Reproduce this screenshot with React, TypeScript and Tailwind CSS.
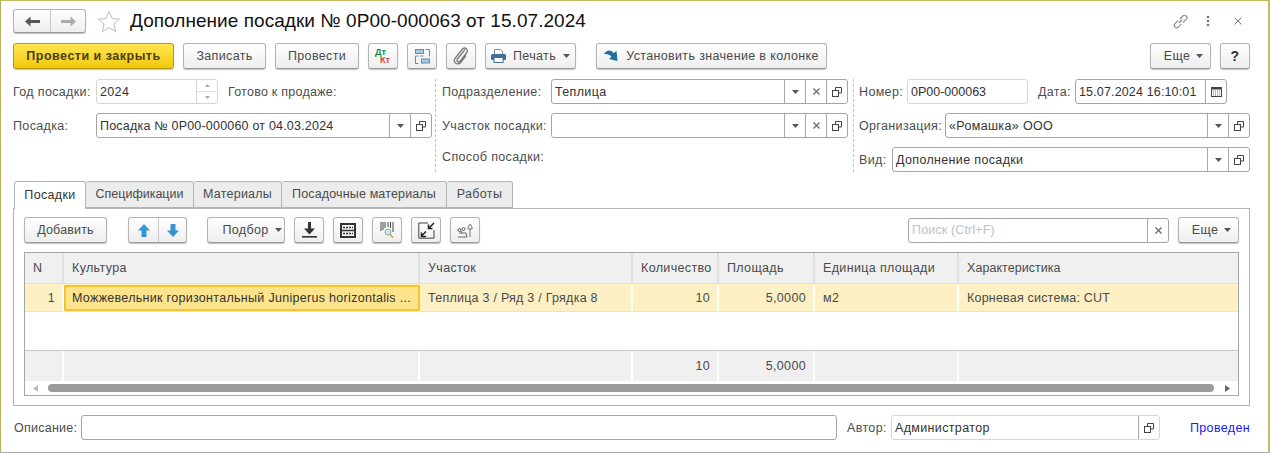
import React from 'react';

const btn = 'h-[26px] flex items-center justify-center rounded-[3px] border border-[#b4b4b4] border-b-[#9a9a9a] bg-gradient-to-b from-white to-[#eeeeee] shadow-[0_1px_1px_rgba(0,0,0,0.25)] text-[#4a4a4a] shrink-0';

const Caret = () => (
  <svg width="7" height="4" viewBox="0 0 7 4" className="shrink-0"><path d="M0 0h7L3.5 4z" fill="#555" /></svg>
);

const OpenIcon = () => (
  <svg width="10" height="10" viewBox="0 0 10 10" fill="none" stroke="#444" strokeWidth="1">
    <path d="M3.500 3V.5h6v5.500H7" />
    <rect x=".5" y="3.500" width="6" height="6" fill="#fff" />
  </svg>
);

const Cross = () => (
  <svg width="7" height="7" viewBox="0 0 7 7" stroke="#666" strokeWidth="1.2"><path d="M.5.5l6 6M6.5.5l-6 6" /></svg>
);

const FieldBtn = ({ children }: { children: React.ReactNode }) => (
  <div className="w-[21px] h-full border-l border-[#a8a8a8] flex items-center justify-center shrink-0">{children}</div>
);

const Input = ({ value, className, soft, textClass, children }: { value?: string; className: string; soft?: boolean; textClass?: string; children?: React.ReactNode }) => (
  <div className={`h-[25px] flex items-stretch rounded-[3px] border bg-white shrink-0 ${soft ? 'border-[#d6d6d6]' : 'border-[#a5a5a5]'} ${className}`}>
    <div className={`flex-1 min-w-0 px-[3px] pt-px flex items-center whitespace-nowrap overflow-hidden text-[#333] ${textClass ?? ''}`}>{value}</div>
    {children}
  </div>
);

const Label = ({ children, className }: { children: React.ReactNode; className?: string }) => (
  <div className={`text-[#4d4d4d] whitespace-nowrap shrink-0 pt-px ${className ?? ''}`}>{children}</div>
);

const cols = ['w-[39px]', 'w-[356px]', 'w-[213px]', 'w-[86px]', 'w-[96px]', 'w-[144px]', 'flex-1'];

const Row = ({ cells, className, sep }: { cells: { t?: string; right?: boolean; cur?: boolean; tc?: string }[]; className: string; sep: string }) => (
  <div className={`flex ${className}`}>
    {cells.map((c, i) => (
      <div
        key={i}
        className={`${cols[i]} flex items-center px-2 min-w-0 whitespace-nowrap text-[#4a4a4a] ${c.tc ?? ''} ${c.right ? 'justify-end !pr-[7px]' : ''} ${i < 6 ? `border-r-2 ${sep}` : ''} ${c.cur ? 'bg-[#fde48c] !border-2 !border-[#f6c42c] rounded-[1px] !text-[#333] px-[6px]' : ''}`}
      >
        {c.t}
      </div>
    ))}
  </div>
);

export default function App() {
  return (
    <div className="w-[1270px] h-[453px] bg-white overflow-hidden text-[12.5px] tracking-[0.35px] font-['Liberation_Sans',Arial,sans-serif]">
      <div className="w-[1270px] h-[453px] flex flex-col border-t border-l border-r-2 border-b border-t-[#c9b862] border-l-[#c0ae60] border-r-[#c9b862] border-b-[#a8a8a8] pl-3 pr-[18px]">
        {/* Title */}
        <div className="flex items-center h-[24px] mt-[8px] shrink-0">
          <div className="w-[73px] h-[24px] flex rounded-[3px] border border-[#b4b4b4] border-b-[#9a9a9a] bg-gradient-to-b from-white to-[#eeeeee] shadow-[0_1px_1px_rgba(0,0,0,0.25)] shrink-0">
            <div className="w-[37px] flex items-center justify-center border-r border-[#c8c8c8]">
              <svg width="15" height="11" viewBox="0 0 15 11"><path d="M0 5.5L5.5 0.5v3.4H15v3.2H5.5v3.4z" fill="#555" /></svg>
            </div>
            <div className="flex-1 flex items-center justify-center">
              <svg width="15" height="11" viewBox="0 0 15 11"><path d="M15 5.5L9.5 0.5v3.4H0v3.2h9.5v3.4z" fill="#aaa" /></svg>
            </div>
          </div>
          <svg width="24" height="23" viewBox="0 0 24 23" className="ml-[11px] shrink-0" fill="#fff" stroke="#bdbdbd"><path d="M12 1.5l3.1 7 7.4.7-5.6 5 1.7 7.4L12 17.7l-6.6 3.9 1.7-7.4-5.6-5 7.4-.7z" /></svg>
          <div className="ml-[9px] text-[19px] tracking-[0.05px] text-[#111] whitespace-nowrap">Дополнение посадки № 0P00-000063 от 15.07.2024</div>
          <div className="flex-1" />
          <svg width="17" height="17" viewBox="0 0 17 17" fill="none" stroke="#8a8a8a" strokeWidth="1.1" className="mr-[17px]">
            <path d="M7 10l3.5-3.5M6.2 7.5L3 10.700a2.400 2.400 0 0 0 3.400 3.400l3-3M7.800 6l3-3a2.400 2.400 0 0 1 3.400 3.400l-3.200 3.100" />
          </svg>
          <svg width="4" height="12" viewBox="0 0 4 12" fill="#777" className="mr-[24px]"><circle cx="2" cy="2" r="1.300" /><circle cx="2" cy="6" r="1.300" /><circle cx="2" cy="10" r="1.300" /></svg>
          <svg width="8" height="8" viewBox="0 0 8 8" stroke="#777" className="mr-[8px]"><path d="M.5.5l7 7M7.500.5l-7 7" /></svg>
        </div>

        {/* Command bar */}
        <div className="flex items-center mt-[10px] shrink-0">
          <div className="h-[26px] w-[161px] flex items-center justify-center rounded-[3px] border border-[#b39a10] bg-gradient-to-b from-[#ffe64a] to-[#f2c800] shadow-[0_1px_1px_rgba(0,0,0,0.25)] font-bold tracking-[0.5px] text-[#4a3f10] shrink-0">Провести и закрыть</div>
          <div className={`${btn} w-[83px] ml-[9px]`}>Записать</div>
          <div className={`${btn} w-[84px] ml-[9px]`}>Провести</div>
          <div className={`${btn} w-[30px] ml-[9px] flex-col !items-start pl-[6px] text-[9px] font-bold leading-[8px] tracking-normal`}>
            <span className="text-[#0e8a4a]">Дт</span>
            <span className="text-[#e5383b] ml-[5px]">Кт</span>
          </div>
          <div className={`${btn} w-[30px] ml-[9px]`}>
            <svg width="15" height="15" viewBox="0 0 15 15" fill="none" stroke="#5b8fb9">
              <rect x=".5" y=".5" width="8" height="4" fill="#a9c8e2" />
              <rect x="6.500" y="10" width="8" height="4" fill="#a9c8e2" />
              <path d="M10.500.5h4v7M3.500 7H.5v7.500h3M8.500 7H5" />
            </svg>
          </div>
          <div className={`${btn} w-[30px] ml-[9px]`}>
            <svg width="16" height="20" viewBox="0 0 16 20" fill="none" stroke="#777" strokeWidth="1.300"><path d="M12.500 5L5 14.500c-1.500 2 1 4 2.600 2.200L14 8.500c2.500-3.200-1.500-7-4.200-3.800L2.500 14c-2.800 4 3 7.500 6 3.500l5-6.500" transform="translate(-.5 -1.500)" /></svg>
          </div>
          <div className={`${btn} w-[91px] ml-[9px] gap-[7px]`}>
            <svg width="15" height="14" viewBox="0 0 15 14"><path d="M3.500.5h6l2 2v3h-8z" fill="#fff" stroke="#888" /><rect y="5" width="15" height="6" rx="1.500" fill="#3f6f9a" /><rect x="3" y="8.500" width="9" height="5" fill="#fff" stroke="#3f6f9a" /></svg>
            <span>Печать</span>
            <Caret />
          </div>
          <div className={`${btn} w-[231px] ml-[20px] gap-[8px]`}>
            <svg width="14" height="12" viewBox="0 0 14 12"><path d="M0 4C3 -.5 7.500 -.5 9.500 3.200L12.500 1l1 10-8.500-2 2.400-2.200C6 4.800 3.500 3.800 0 4z" fill="#1f6ea8" /></svg>
            <span>Установить значение в колонке</span>
          </div>
          <div className="flex-1" />
          <div className={`${btn} w-[61px] gap-[6px] pl-[6px]`}><span>Еще</span><Caret /></div>
          <div className={`${btn} w-[30px] ml-[9px] font-bold text-[14px] text-[#333]`}>?</div>
        </div>

        {/* Form columns */}
        <div className="flex mt-[10px] h-[93px] shrink-0">
          <div className="w-[419px] flex flex-col gap-[9px] shrink-0">
            <div className="flex items-center">
              <Label className="w-[83px]">Год посадки:</Label>
              <Input value="2024" soft className="w-[122px]">
                <div className="w-[21px] border-l border-[#d6d6d6] flex flex-col shrink-0">
                  <div className="flex-1 border-b border-[#e0e0e0] flex items-center justify-center"><svg width="5" height="3" viewBox="0 0 5 3"><path d="M2.500 0L5 3H0z" fill="#aaa" /></svg></div>
                  <div className="flex-1 flex items-center justify-center"><svg width="5" height="3" viewBox="0 0 5 3"><path d="M0 0h5L2.500 3z" fill="#aaa" /></svg></div>
                </div>
              </Input>
              <Label className="ml-[10px] tracking-[0.25px]">Готово к продаже:</Label>
            </div>
            <div className="flex items-center">
              <Label className="w-[83px]">Посадка:</Label>
              <Input value="Посадка № 0P00-000060 от 04.03.2024" textClass="tracking-[0.2px]" className="w-[336px]">
                <FieldBtn><Caret /></FieldBtn>
                <FieldBtn><OpenIcon /></FieldBtn>
              </Input>
            </div>
          </div>
          <div className="ml-[3px] mr-[6px] border-l border-dashed border-[#c4c4c4] h-[93px] shrink-0" />
          <div className="w-[406px] flex flex-col gap-[9px] shrink-0">
            <div className="flex items-center">
              <Label className="w-[109px]">Подразделение:</Label>
              <Input value="Теплица" className="w-[297px]">
                <FieldBtn><Caret /></FieldBtn>
                <FieldBtn><Cross /></FieldBtn>
                <FieldBtn><OpenIcon /></FieldBtn>
              </Input>
            </div>
            <div className="flex items-center">
              <Label className="w-[109px]">Участок посадки:</Label>
              <Input className="w-[297px]">
                <FieldBtn><Caret /></FieldBtn>
                <FieldBtn><Cross /></FieldBtn>
                <FieldBtn><OpenIcon /></FieldBtn>
              </Input>
            </div>
            <Label className="mt-0">Способ посадки:</Label>
          </div>
          <div className="ml-[5px] mr-[5px] border-l border-dashed border-[#c4c4c4] h-[93px] shrink-0" />
          <div className="flex-1 flex flex-col gap-[9px]">
            <div className="flex items-center">
              <Label className="w-[48px]">Номер:</Label>
              <Input value="0P00-000063" textClass="tracking-normal" soft className="w-[121px]" />
              <Label className="ml-[10px] w-[37px]">Дата:</Label>
              <Input value="15.07.2024 16:10:01" textClass="tracking-[0.15px]" className="w-[152px]">
                <FieldBtn>
                  <svg width="11" height="11" viewBox="0 0 11 11"><rect x=".5" y="1.500" width="10" height="9" fill="none" stroke="#444" /><rect x=".5" y="1" width="10" height="2.500" fill="#444" /><path d="M2 5h7M2 7h7M2 9h7" stroke="#777" strokeDasharray="1 1" /></svg>
                </FieldBtn>
              </Input>
            </div>
            <div className="flex items-center">
              <Label className="w-[86px]">Организация:</Label>
              <Input value="«Ромашка» ООО" className="flex-1 !shrink">
                <FieldBtn><Caret /></FieldBtn>
                <FieldBtn><OpenIcon /></FieldBtn>
              </Input>
            </div>
            <div className="flex items-center">
              <Label className="w-[33px]">Вид:</Label>
              <Input value="Дополнение посадки" className="flex-1 !shrink">
                <FieldBtn><Caret /></FieldBtn>
                <FieldBtn><OpenIcon /></FieldBtn>
              </Input>
            </div>
          </div>
        </div>

        {/* Tabs */}
        <div className="flex h-[28px] mt-[9px] pl-px shrink-0 relative z-10">
          <div className="w-[72px] h-[28px] flex items-center justify-center bg-white border border-b-0 border-[#b4b4b4] rounded-t-[3px] text-[#333]">Посадки</div>
          <div className="w-[108px] h-[27px] flex items-center justify-center bg-[#ececec] border border-l-0 border-[#b4b4b4] rounded-t-[3px] text-[#4a4a4a] tracking-normal">Спецификации</div>
          <div className="w-[88px] h-[27px] flex items-center justify-center bg-[#ececec] border border-l-0 border-[#b4b4b4] rounded-t-[3px] text-[#4a4a4a] tracking-[0.25px]">Материалы</div>
          <div className="w-[165px] h-[27px] flex items-center justify-center bg-[#ececec] border border-l-0 border-[#b4b4b4] rounded-t-[3px] text-[#4a4a4a] tracking-[0.15px]">Посадочные материалы</div>
          <div className="w-[66px] h-[27px] flex items-center justify-center bg-[#ececec] border border-l-0 border-[#b4b4b4] rounded-t-[3px] text-[#4a4a4a]">Работы</div>
        </div>

        {/* Panel */}
        <div className="h-[198px] -mt-px border border-[#b4b4b4] px-[10px] pt-2 flex flex-col shrink-0">
          <div className="flex items-center shrink-0">
            <div className={`${btn} w-[83px] tracking-[0.15px]`}>Добавить</div>
            <div className={`${btn} w-[59px] ml-[21px] !justify-start`}>
              <div className="w-[30px] h-full border-r border-[#c8c8c8] flex items-center justify-center">
                <svg width="12" height="13" viewBox="0 0 12 13"><path d="M6 0l6 6.500H8.500V13h-5V6.500H0z" fill="#2f96d8" /></svg>
              </div>
              <div className="flex-1 flex items-center justify-center">
                <svg width="12" height="13" viewBox="0 0 12 13"><path d="M6 13L0 6.500h3.500V0h5v6.500H12z" fill="#3a8fd0" /></svg>
              </div>
            </div>
            <div className={`${btn} w-[78px] ml-[20px] gap-[6px] pl-[12px]`}><span>Подбор</span><Caret /></div>
            <div className={`${btn} w-[30px] ml-[9px]`}>
              <svg width="15" height="16" viewBox="0 0 15 16" fill="#333"><path d="M6 0h3v6.500h4L7.500 12.500 2 6.500h4z" /><rect y="14" width="15" height="1.600" /></svg>
            </div>
            <div className={`${btn} w-[30px] ml-[9px]`}>
              <svg width="16" height="15" viewBox="0 0 16 15" fill="none" stroke="#333"><rect x="1" y="1" width="14" height="13" strokeWidth="2" /><path d="M1 7.500h14" strokeWidth="1.500" /><path d="M3 4.500h10M3 10.500h10" strokeWidth="1.500" strokeDasharray="2 1" /></svg>
            </div>
            <div className={`${btn} w-[30px] ml-[9px]`}>
              <svg width="15" height="16" viewBox="0 0 15 16" fill="none"><path d="M1 0v9M3 0v8M5 0v6M8 0v5M10.500 0v6M13 0v10" stroke="#444" /><circle cx="8" cy="10" r="3" fill="#cfe3f2" stroke="#8aa" /><path d="M10 12.500l3 3" stroke="#c9953c" strokeWidth="1.500" /></svg>
            </div>
            <div className={`${btn} w-[30px] ml-[9px]`}>
              <svg width="17" height="17" viewBox="0 0 17 17" fill="none"><path d="M10 1H.8v15.200H16V8" stroke="#444" /><path d="M16 1l-5.500 5.500M10.500 2.500v4h4" stroke="#222" strokeWidth="1.500" /><path d="M3 14.500l5-5M3.500 10.500v4H8" stroke="#222" strokeWidth="1.500" /></svg>
            </div>
            <div className={`${btn} w-[30px] ml-[9px]`}>
              <svg width="16" height="15" viewBox="0 0 16 15" fill="none" stroke="#666"><circle cx="2.500" cy="7" r="1.500" /><circle cx="6.500" cy="6" r="1.500" /><path d="M2 10h7M1 14h9l-1-4M4 8l1 2" /><path d="M13 1l2 3v2h-4V4zM13 6v8" stroke="#777" /></svg>
            </div>
            <div className="flex-1" />
            <div className="w-[261px] h-[25px] flex items-stretch rounded-[3px] border border-[#a5a5a5] bg-white shrink-0">
              <div className="flex-1 px-[3px] flex items-center text-[#c0c0c0] whitespace-nowrap tracking-[0.15px]">Поиск (Ctrl+F)</div>
              <FieldBtn><Cross /></FieldBtn>
            </div>
            <div className={`${btn} w-[61px] ml-[9px] gap-[6px] pl-[6px]`}><span>Еще</span><Caret /></div>
          </div>

          <div className="mt-[9px] h-[144px] border border-[#a5a5a5] flex flex-col shrink-0">
            <Row
              className="h-[31px] bg-[#f0f0f0] border-b border-[#e0e0e0] shrink-0"
              sep="border-[#e0e0e0]"
              cells={[{ t: 'N' }, { t: 'Культура' }, { t: 'Участок' }, { t: 'Количество' }, { t: 'Площадь' }, { t: 'Единица площади' }, { t: 'Характеристика', tc: 'tracking-[0.05px]' }]}
            />
            <Row
              className="h-[28px] pt-px bg-[#fdf0c4] border-b border-[#e4e4e4] shrink-0"
              sep="border-[#fff]"
              cells={[{ t: '1', right: true }, { t: 'Можжевельник горизонтальный Juniperus horizontalis ...', cur: true, tc: 'tracking-[0.3px]' }, { t: 'Теплица 3 / Ряд 3 / Грядка 8', tc: 'tracking-[0.25px]' }, { t: '10', right: true }, { t: '5,0000', right: true }, { t: 'м2' }, { t: 'Корневая система: CUT', tc: 'tracking-[0.2px]' }]}
            />
            <div className="h-[38px] shrink-0" />
            <Row
              className="h-[31px] bg-[#f0f0f0] border-t border-[#c8c8c8] shrink-0"
              sep="border-[#fff]"
              cells={[{}, {}, {}, { t: '10', right: true }, { t: '5,0000', right: true }, {}, {}]}
            />
            <div className="flex-1 flex items-center px-[8px] gap-[6px]">
              <svg width="5" height="7" viewBox="0 0 5 7" className="shrink-0"><path d="M5 0v7L0 3.500z" fill="#bbb" /></svg>
              <div className="flex-1 h-[8px] rounded-full bg-[#9b9b9b] ml-[4px] mr-[5px]" />
              <svg width="5" height="7" viewBox="0 0 5 7" className="shrink-0"><path d="M0 0v7l5-3.500z" fill="#666" /></svg>
            </div>
          </div>
        </div>

        {/* Footer */}
        <div className="flex items-center mt-[9px] shrink-0">
          <Label className="w-[68px] pl-px tracking-[0.25px]">Описание:</Label>
          <Input className="w-[756px]" />
          <Label className="ml-[10px] w-[44px]">Автор:</Label>
          <Input value="Администратор" soft className="w-[269px]">
            <FieldBtn><OpenIcon /></FieldBtn>
          </Input>
          <div className="flex-1" />
          <div className="text-[#1a1aff] whitespace-nowrap pt-px">Проведен</div>
        </div>
      </div>
    </div>
  );
}
